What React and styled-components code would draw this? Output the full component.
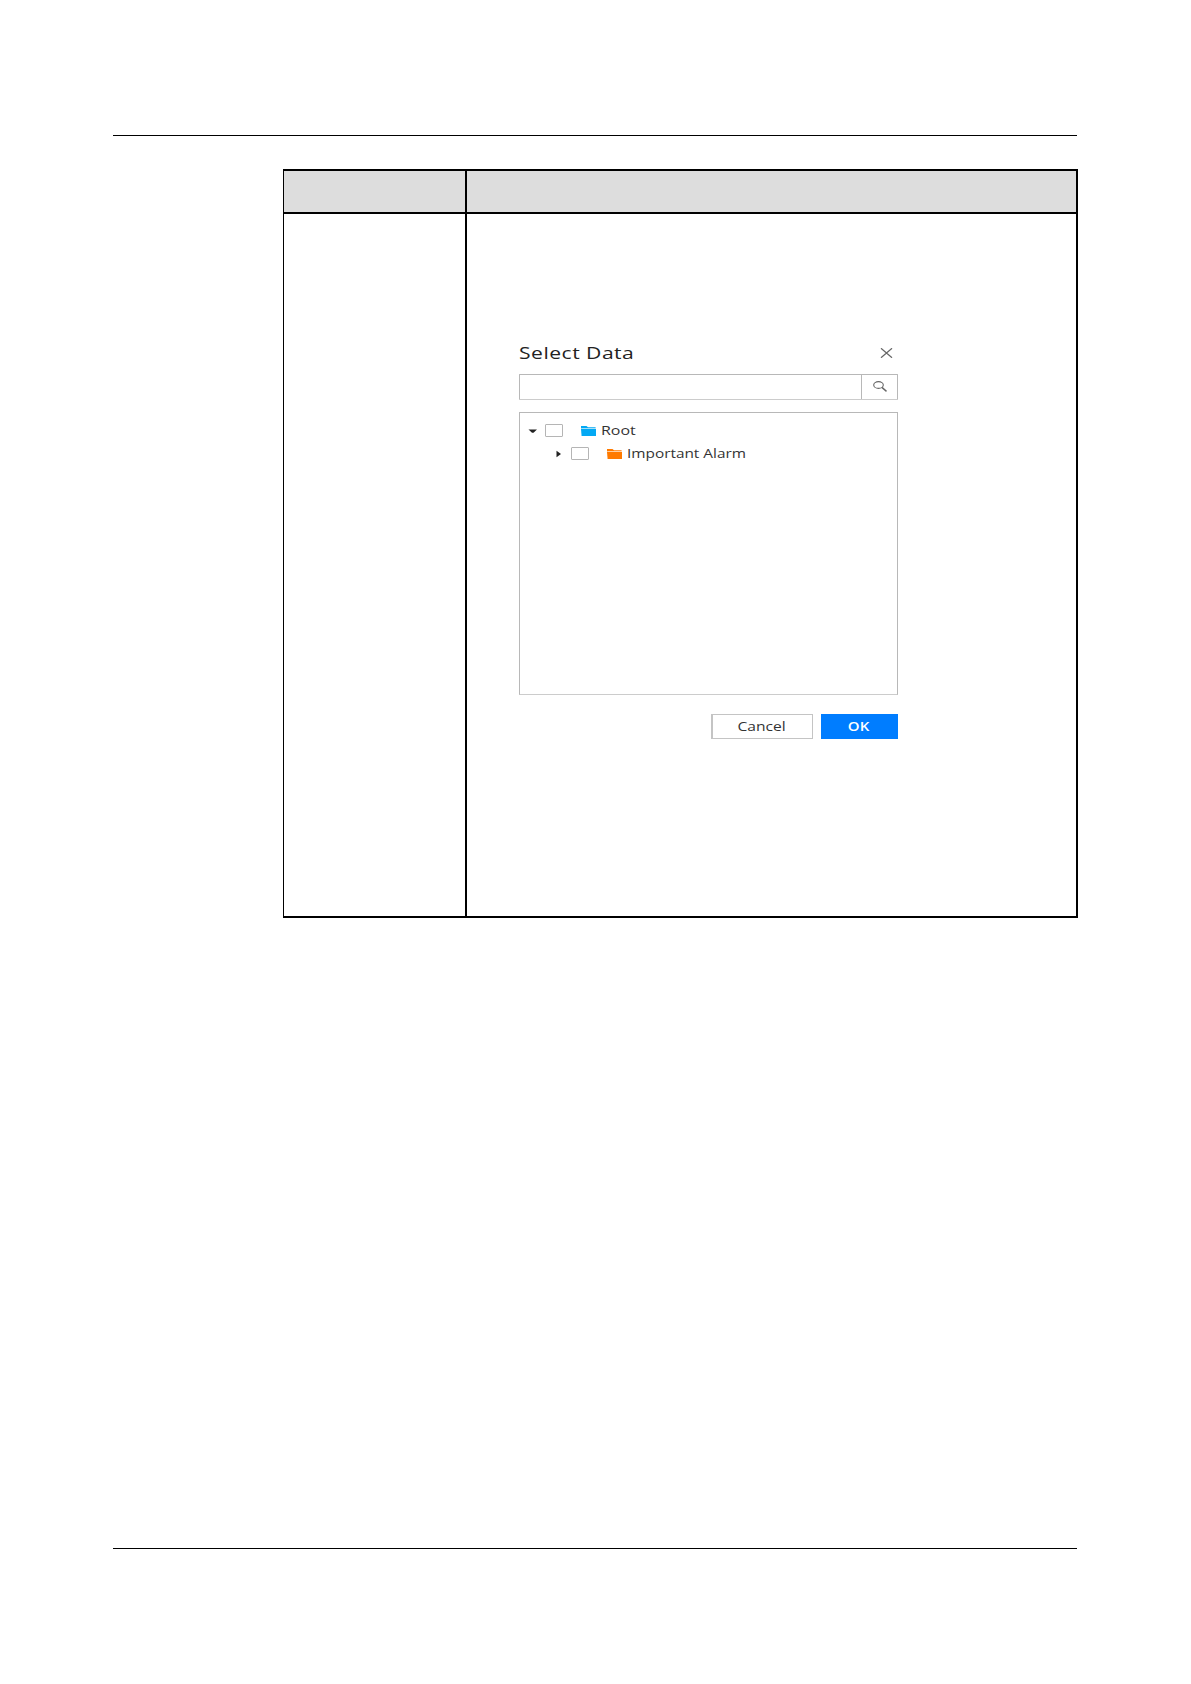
import React from 'react'
import styled, { createGlobalStyle } from 'styled-components'

const GlobalStyle = createGlobalStyle`
    * {
        box-sizing: border-box;
    }

    body {
        margin: 0;
        background: #fff;
        font-family: "Open Sans", "Noto Sans", sans-serif;
        color: #333;
    }
`

const Page = styled.div`
    display: flex;
    flex-direction: column;
    justify-content: space-between;
    width: 1191px;
    height: 1684px;
    padding: 135px 113px 135px;
    background: #fff;
`

const Rule = styled.div`
    height: 1px;
    width: 964px;
    background: #000;
`

const Table = styled.div`
    display: grid;
    grid-template-columns: 181px 1fr;
    grid-template-rows: 41px 702px;
    gap: 2px;
    width: 795px;
    margin: 33px 0 0 170px;
    padding: 2px 2px 2px 1px;
    background: #000;
`

const Cell = styled.div`
    background: ${props => props.$head ? '#ddd' : '#fff'};
    padding: ${props => props.$content ? '128px 0 0 52px' : '0'};
`

const Dialog = styled.div`
    display: flex;
    flex-direction: column;
    width: 379px;
`

const DialogHeader = styled.div`
    display: flex;
    justify-content: space-between;
    align-items: center;
    height: 22px;
    padding: 0 5px 1px 0;
`

/* wide lettering, stretched from the given edge */
const Label = styled.span`
    display: inline-block;
    white-space: nowrap;
    font-size: ${props => props.$size || 12}px;
    font-weight: ${props => props.$weight || 400};
    line-height: 20px;
    letter-spacing: ${props => props.$spacing || 0}px;
    color: ${props => props.$color || '#333'};
    transform: scaleX(${props => props.$stretch || 1.25});
    transform-origin: ${props => props.$origin || 'left'} center;
`

const SearchBar = styled.div`
    display: flex;
    height: 26px;
    margin-top: 10px;
    border: 1px solid #b8b8b8;
    border-bottom-color: #ccc;
    border-radius: 1px;
`

const SearchInput = styled.input`
    flex: 1;
    min-width: 0;
    border: 0;
    outline: none;
    background: transparent;
`

const SearchButton = styled.div`
    display: flex;
    justify-content: center;
    align-items: center;
    width: 36px;
    padding-bottom: 1px;
    border-left: 1px solid #b8b8b8;
`

const Tree = styled.div`
    height: 283px;
    margin-top: 12px;
    padding: 6px 0 0 8px;
    border: 1px solid #b8b8b8;
    border-bottom-color: #ccc;
`

const TreeRow = styled.div`
    display: flex;
    align-items: center;
    height: 23px;
    padding-left: ${props => props.$level * 26}px;
`

const Arrow = styled.svg`
    width: 10px;
    height: 10px;
    fill: #222;
`

const Checkbox = styled.div`
    width: 18px;
    height: 13px;
    margin: 0 18px 0 7px;
    border: 1px solid #b5b5b5;
    border-radius: 1px;
`

const FolderSvg = styled.svg`
    width: 15px;
    height: 10px;
    margin-right: 5px;
`

const Footer = styled.div`
    display: flex;
    justify-content: flex-end;
    gap: 8px;
    margin-top: 19px;
`

const Button = styled.div`
    display: flex;
    justify-content: center;
    align-items: center;
    width: ${props => props.$primary ? 77 : 102}px;
    height: 25px;
    padding-right: 1px;
    background: ${props => props.$primary ? '#007dff' : '#fff'};
    border: ${props => props.$primary ? '0' : '1px solid #c4c4c4'};
    border-left-width: ${props => props.$primary ? 0 : 2}px;
`

const Folder = ({ color }) => (
    <FolderSvg viewBox="0 0 15 10">
        <path d="M0 0h5.5l1.5 1.2H14.6v1.3H0z" fill={color} />
        <path d="M0 3h15v7H.6z" fill={color} />
        <path d="M.5 2.7H14.5" stroke="#fff" strokeWidth="0.6" opacity="0.6" />
    </FolderSvg>
)

const nodes = [
    { name: 'Root', level: 0, open: true, color: '#03a9f4', stretch: 1.33 },
    { name: 'Important Alarm', level: 1, open: false, color: '#ff7a00', stretch: 1.28 },
]

const SelectData = () => {
    return (
        <Dialog>
            <DialogHeader>
                <Label $size={17} $stretch={1.24} $spacing={0.4} $color="#222" $weight={500}>Select Data</Label>
                <svg width="13" height="10" viewBox="0 0 13 10">
                    <path d="M1 .3 12 9.7M12 .3 1 9.7" stroke="#666" strokeWidth="1.3" fill="none" />
                </svg>
            </DialogHeader>
            <SearchBar>
                <SearchInput type="text" />
                <SearchButton>
                    <svg width="14" height="11" viewBox="0 0 14 11">
                        <ellipse cx="5.5" cy="4" rx="4.8" ry="3.4" fill="none" stroke="#666" strokeWidth="1.1" />
                        <path d="m8.9 6.4 4.6 4" stroke="#666" strokeWidth="1.4" />
                    </svg>
                </SearchButton>
            </SearchBar>
            <Tree>
                {nodes.map(node => (
                    <TreeRow key={node.name} $level={node.level}>
                        <Arrow viewBox="0 0 10 10">
                            <path d={node.open ? 'M.5 3.5H9L5.5 6.8H4z' : 'M2.5 1.8 7 5 2.5 8.2z'} />
                        </Arrow>
                        <Checkbox />
                        <Folder color={node.color} />
                        <Label $stretch={node.stretch}>{node.name}</Label>
                    </TreeRow>
                ))}
            </Tree>
            <Footer>
                <Button><Label $stretch={1.3} $origin="center">Cancel</Label></Button>
                <Button $primary><Label $stretch={1.25} $origin="center" $weight={600} $color="#fff">OK</Label></Button>
            </Footer>
        </Dialog>
    )
}

const App = () => {
    return (
        <Page>
            <GlobalStyle />
            <div>
                <Rule />
                <Table>
                    <Cell $head />
                    <Cell $head />
                    <Cell />
                    <Cell $content>
                        <SelectData />
                    </Cell>
                </Table>
            </div>
            <Rule />
        </Page>
    )
}

export default App
